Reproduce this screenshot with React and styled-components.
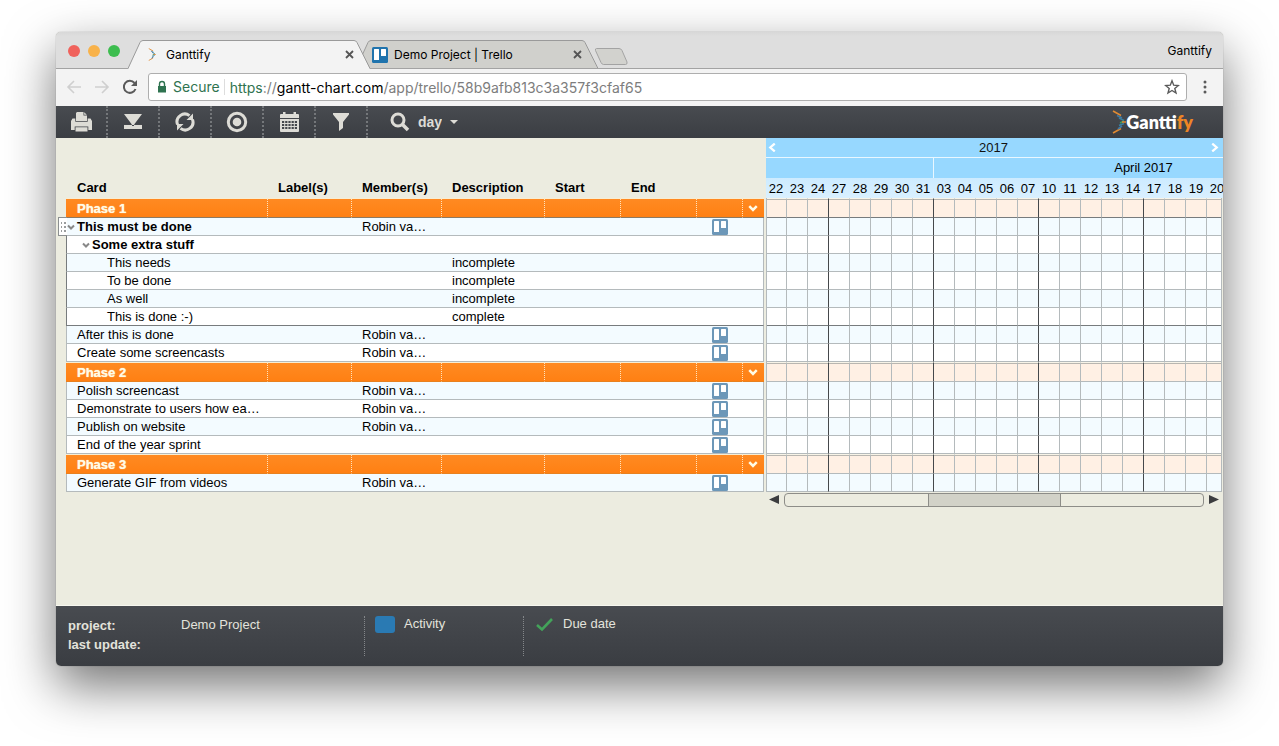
import React, { Fragment, useState } from 'react'
import styled, { createGlobalStyle, css } from 'styled-components'

const tabs = [
    { title: 'Ganttify', icon: 'ganttify', active: true },
    { title: 'Demo Project | Trello', icon: 'trello', active: false },
]

const columns = [
    { title: 'Card', width: 202 },
    { title: 'Label(s)', width: 84 },
    { title: 'Member(s)', width: 90 },
    { title: 'Description', width: 103 },
    { title: 'Start', width: 76 },
    { title: 'End', width: 76 },
    { title: '', width: 46 },
    { title: '', width: 21 },
]

const days = [
    '22', '23', '24', '27', '28', '29', '30', '31', '03', '04', '05',
    '06', '07', '10', '11', '12', '13', '14', '17', '18', '19', '20',
]
const weekEnds = ['24', '31', '07', '14']

const member = 'Robin va…'

const phases = [
    {
        title: 'Phase 1',
        selected: true,
        cards: [
            { name: 'This must be done', level: 0, open: true, member, trello: true, selected: true, handle: true },
            { name: 'Some extra stuff', level: 1, open: true, selected: true },
            { name: 'This needs', level: 2, description: 'incomplete', selected: true },
            { name: 'To be done', level: 2, description: 'incomplete', selected: true },
            { name: 'As well', level: 2, description: 'incomplete', selected: true },
            { name: 'This is done :-)', level: 2, description: 'complete', selected: true, last: true },
            { name: 'After this is done', level: 0, member, trello: true },
            { name: 'Create some screencasts', level: 0, member, trello: true },
        ],
    },
    {
        title: 'Phase 2',
        cards: [
            { name: 'Polish screencast', level: 0, member, trello: true },
            { name: 'Demonstrate to users how ea…', level: 0, member, trello: true },
            { name: 'Publish on website', level: 0, member, trello: true },
            { name: 'End of the year sprint', level: 0, trello: true },
        ],
    },
    {
        title: 'Phase 3',
        cards: [{ name: 'Generate GIF from videos', level: 0, member, trello: true }],
    },
]

const GlobalStyle = createGlobalStyle`
    * {
        box-sizing: border-box;
    }
    body {
        margin: 0;
        background: #ffffff;
        font-family: 'Liberation Sans', Arial, sans-serif;
        font-size: 13px;
        color: #000000;
    }
    button, input, select {
        margin: 0;
        padding: 0;
        border: none;
        background: none;
        color: inherit;
        font: inherit;
        cursor: pointer;
    }
    table {
        border-collapse: separate;
        border-spacing: 0;
        table-layout: fixed;
    }
    th, td {
        padding: 0;
    }
    svg {
        display: block;
        flex: none;
    }
`

/* browser window */

const Page = styled.div`
    display: flex;
    min-height: 100vh;
    padding: 32px 56px 80px;
`
const BrowserWindow = styled.div`
    display: flex;
    flex-direction: column;
    flex: 1;
    min-width: 0;
    overflow: hidden;
    border-radius: 5px;
    background: #ecece0;
    box-shadow: 0 0 1px rgba(0, 0, 0, 0.5), 0 20px 50px rgba(0, 0, 0, 0.55);
`
const TitleBar = styled.div`
    display: flex;
    align-items: flex-end;
    height: 37px;
    padding-left: 12px;
    background: linear-gradient(#d8d8d8, #dedede 4px);
    box-shadow: inset 0 -1px #a3a3a3;
    font-family: Inter, Roboto, sans-serif;
    font-size: 12px;
`
const TrafficLights = styled.div`
    display: flex;
    align-self: center;
    gap: 8px;
    width: 60px;
`
const TrafficLight = styled.button`
    width: 12px;
    height: 12px;
    border-radius: 50%;
    background: ${(props) => props.$color};
`
const TabShell = styled.div`
    position: relative;
    display: flex;
    align-items: center;
    width: 242px;
    height: 29px;
    padding: 0 16px;
    z-index: ${(props) => (props.$active ? 2 : 1)};
    & + & {
        margin-left: -14px;
    }
`
const TabShape = styled.svg`
    position: absolute;
    top: 0;
    left: 0;
    z-index: -1;
`
const TabTitle = styled.span`
    flex: 1;
    margin-left: 6px;
    white-space: nowrap;
`
const TabClose = styled.button`
    color: #555555;
`
const NewTab = styled.button`
    align-self: flex-end;
    margin: 0 0 4px -4px;
    z-index: 3;
`
const ProfileName = styled.button`
    align-self: center;
    margin: 0 11px 0 auto;
    cursor: default;
`
const AddressRow = styled.div`
    display: flex;
    align-items: center;
    height: 37px;
    padding: 0 10px 1px;
    gap: 10px;
    background: #f3f3f3;
    color: #5a5a5a;
`
const NavButtons = styled.nav`
    display: flex;
    gap: 12px;
`
const NavButton = styled.button`
    display: flex;
    justify-content: center;
    width: 16px;
    color: ${(props) => (props.disabled ? '#cfcfcf' : '#5a5a5a')};
`
const AddressBar = styled.div`
    display: flex;
    align-items: center;
    flex: 1;
    height: 28px;
    padding: 0 6px 0 7px;
    border: 1px solid #aeaeae;
    border-radius: 3px;
    background: #ffffff;
    font-family: Inter, Roboto, sans-serif;
    font-size: 14px;
    white-space: nowrap;
`
const Secure = styled.span`
    margin-left: 5px;
    padding-right: 4px;
    border-right: 1px solid #dddddd;
    color: #2f7350;
    line-height: 16px;
`
const Url = styled.span`
    flex: 1;
    margin-left: 5px;
    color: #7d7d7d;
`
const UrlScheme = styled.span`
    color: #2f7350;
`
const UrlHost = styled.span`
    color: #000000;
`

/* application */

const Toolbar = styled.div`
    display: flex;
    height: 32px;
    background: linear-gradient(#484b50, #3b3e43);
    color: #dddcd6;
`
const ToolButton = styled.button`
    display: flex;
    align-items: center;
    justify-content: center;
    width: 52px;
    border-right: 2px dotted #74777a;
    color: #dddcd6;
`
const ZoomLabel = styled.label`
    display: flex;
    align-items: center;
    gap: 8px;
    padding-left: 22px;
    font-size: 14px;
    font-weight: bold;
`
const ZoomSelect = styled.select`
    width: 24px;
    appearance: none;
    outline: none;
`
const Logo = styled.a`
    display: flex;
    align-items: center;
    margin: 0 30px 0 auto;
    color: #ffffff;
    font: 800 18px Lato, sans-serif;
    text-decoration: none;
    span {
        color: #ee8525;
    }
`
const Workspace = styled.main`
    display: flex;
    flex: 1;
    align-items: flex-start;
    gap: 2px;
    padding-left: 10px;
`
const CardTable = styled.table`
    flex: none;
    width: 698px;
`
const HeadCell = styled.th`
    height: 60px;
    padding: 0 0 2px 11px;
    vertical-align: bottom;
    text-align: left;
    line-height: 16px;
    & + & {
        padding-left: 10px;
    }
`
const PhaseCell = styled.td`
    height: 20px;
    padding-left: ${(props) => (props.$first ? 11 : 0)}px;
    border-top: 1px solid #f8edd2;
    border-bottom: 1px solid ${(props) => (props.$selected ? '#8d7a62' : '#e8811f')};
    background: linear-gradient(#ff8a22, #ff8013);
    color: #fffbe6;
    font-weight: bold;
    line-height: 18px;
    text-shadow: 0 0 1px #fffbe6;
    &:first-child {
        padding-top: 1px;
        line-height: 17px;
    }
    &:not(:last-child) {
        border-right: 1px dotted #ffe3bd;
    }
`
const PhaseToggle = styled.button`
    display: flex;
    align-items: center;
    justify-content: center;
    width: 20px;
    height: 18px;
`
const CardRow = styled.tr`
    background: ${(props) => (props.$odd ? '#f3fbff' : '#ffffff')};
    td {
        height: 18px;
        border-bottom: 1px solid ${(props) => (props.$last ? '#777b7d' : '#b4babc')};
        line-height: 17px;
        white-space: nowrap;
    }
    td:first-child {
        border-left: 1px solid ${(props) => (props.$selected ? '#777b7d' : '#b4babc')};
    }
    td:last-child {
        border-right: 1px solid #b4babc;
    }
`
const TextCell = styled.td`
    padding-left: 10px;
`
const NameCell = styled.div`
    position: relative;
    display: flex;
    align-items: center;
    height: 17px;
    padding-left: ${(props) => props.$level * 15}px;
    font-weight: ${(props) => (props.$bold ? 'bold' : 'normal')};
`
const ToggleSlot = styled.span`
    display: flex;
    flex: none;
    width: 10px;
`
const RowToggle = styled.button`
    color: #888888;
`
const DragHandle = styled.button`
    position: absolute;
    top: -1px;
    left: -9px;
    width: 9px;
    height: 19px;
    border: 1px solid #8b8f90;
    border-right: none;
    background: #ffffff;
    cursor: grab;
`
const TrelloLink = styled.a`
    display: flex;
    justify-content: center;
`
const Timeline = styled.section`
    flex: 1;
    min-width: 0;
`
const YearBar = styled.div`
    display: flex;
    align-items: center;
    justify-content: space-between;
    height: 20px;
    padding: 0 4px 0 2px;
    border-bottom: 1px solid #e9f7ff;
    background: #97d8ff;
    color: #ffffff;
`
const YearName = styled.span`
    color: #111111;
    line-height: 16px;
`
const MonthBar = styled.div`
    display: flex;
    height: 20px;
    overflow: hidden;
    background: #97d8ff;
    line-height: 20px;
    text-align: center;
`
const Month = styled.div`
    flex: none;
    width: ${(props) => props.$width}px;
    & + & {
        border-left: 1px solid #e9f7ff;
    }
`
const DayBar = styled.div`
    display: flex;
    height: 20px;
    overflow: hidden;
    background: linear-gradient(#cdebff, #d9f0ff);
    line-height: 22px;
    text-align: center;
`
const Day = styled.span`
    flex: none;
    width: 21px;
    padding-right: 1px;
`
const GridFrame = styled.div`
    margin-right: 1px;
    overflow: hidden;
    border: solid #b4babc;
    border-width: 0 1px;
`
const GridTable = styled.table`
    width: 461px;
`
const gridLine = css`
    border-right: 1px solid ${(props) => (props.$weekEnd ? '#45484b' : '#b4babc')};
`
const PhaseDay = styled.td`
    height: 20px;
    border-top: 1px solid #f8f4e8;
    border-bottom: 1px solid ${(props) => (props.$selected ? '#777b7d' : '#b4babc')};
    background: #fff0e4;
    box-shadow: inset 0 1px #b9b6b0;
    ${gridLine}
`
const CardDay = styled.td`
    height: 18px;
    border-bottom: 1px solid ${(props) => (props.$last ? '#777b7d' : '#b4babc')};
    background: ${(props) => (props.$odd ? '#f3fbff' : '#ffffff')};
    ${gridLine}
`
const ScrollRow = styled.div`
    display: flex;
    align-items: center;
    gap: 5px;
    height: 16px;
    padding: 0 4px 1px 3px;
    color: #3c3d3f;
`
const ScrollTrack = styled.input`
    flex: 1;
    min-width: 0;
    height: 14px;
    appearance: none;
    border: 1px solid #8d8d88;
    border-radius: 4px;
    background: #ecece0;
    &::-webkit-slider-thumb {
        appearance: none;
        width: 133px;
        height: 12px;
        border: solid #8d8d88;
        border-width: 0 1px;
        background: #d2d2c8;
    }
`
const Footer = styled.footer`
    display: flex;
    height: 61px;
    padding: 10px 12px;
    border-top: 1px solid #f7f7ef;
    background: linear-gradient(#484b50, #3a3d42);
    color: #e3e3dc;
    line-height: 16px;
`
const ProjectInfo = styled.dl`
    display: grid;
    grid-template-columns: 113px 1fr;
    grid-auto-rows: 19px;
    width: 296px;
    margin: 0;
    dt {
        font-weight: bold;
        line-height: 20px;
    }
    dd {
        margin: 0;
        line-height: 18px;
    }
`
const Legend = styled.div`
    display: flex;
    align-items: flex-start;
    gap: 9px;
    width: 159px;
    height: 40px;
    padding-left: 10px;
    border-left: 1px dotted #84878a;
`
const ActivitySwatch = styled.span`
    width: 20px;
    height: 17px;
    border-radius: 3px;
    background: #2a7ab3;
`

function GanttifyMark({ width, height }) {
    return (
        <svg width={width} height={height} viewBox="0 0 14 24" fill="none" strokeWidth="1.600">
            <path d="M1 1l8 4.500M1 23l8-4.500" stroke="#e08a32" />
            <path d="M5 5.500l5 2.500M6 19l4-3" stroke="#3f78a4" />
            <path d="M7 8l5 2.500M7 15.500l5-2" stroke="#3a7fa0" />
            <path d="M8 13l4-2" stroke="#3f9a62" />
            <path d="M10 12h4" stroke="#e08a32" />
        </svg>
    )
}

function TrelloIcon({ color }) {
    return (
        <svg width="16" height="16" viewBox="0 0 16 16">
            <rect width="16" height="16" rx="1.500" fill={color} />
            <rect x="2" y="2" width="5" height="11" rx="0.500" fill="#ffffff" />
            <rect x="9" y="2" width="5" height="7" rx="0.500" fill="#ffffff" />
        </svg>
    )
}

function Chevron({ size = 8, weight = 2, d = 'M1 2.500L4 5.500L7 2.500' }) {
    return (
        <svg width={size} height={size} viewBox="0 0 8 8" fill="none" stroke="currentColor" strokeWidth={weight}>
            <path d={d} />
        </svg>
    )
}

const tools = [
    {
        label: 'Print',
        icon: (
            <svg width="21" height="20" viewBox="0 0 21 20" fill="currentColor">
                <path d="M6 0h6.500v3.500H16V9H5V1z" />
                <path d="M13.200 0.200L15.800 2.800H13.200z" />
                <path d="M1.500 6.500h2.800v3.200h12.400V6.500h2.800L21 9v9h-3.700v-3.500H3.700V18H0V9z" />
                <path d="M4.500 15.300h12V19.500h-12z" />
            </svg>
        ),
    },
    {
        label: 'Collapse',
        icon: (
            <svg width="18" height="16" viewBox="0 0 18 16" fill="currentColor">
                <path d="M0 0h18l-7.500 10H18v5H0v-5h7.500z" />
                <path d="M0 10.500h7.500L9 12l1.500-1.500H18" fill="none" stroke="#44474c" />
            </svg>
        ),
    },
    {
        label: 'Refresh',
        icon: (
            <svg width="20" height="20" viewBox="0 0 20 20" fill="none" stroke="currentColor" strokeWidth="3">
                <path d="M2.500 12.500A7.800 7.800 0 0 1 14.500 3.600" />
                <path d="M17.500 7.500A7.800 7.800 0 0 1 5.500 16.400" />
                <path d="M18 1.500v6.500H11.500z M2 18.500v-6.500H8.500z" fill="currentColor" stroke="none" />
            </svg>
        ),
    },
    {
        label: 'Go to today',
        icon: (
            <svg width="22" height="22" viewBox="0 0 22 22">
                <circle cx="11" cy="11" r="8.700" fill="none" stroke="currentColor" strokeWidth="3" />
                <circle cx="11" cy="11" r="4.300" fill="currentColor" />
            </svg>
        ),
    },
    {
        label: 'Calendar',
        icon: (
            <svg width="19" height="20" viewBox="0 0 19 20" fill="currentColor">
                <path d="M0 3a1 1 0 0 1 1-1h2V0h2.500v2h8V0H16v2h2a1 1 0 0 1 1 1v3H0z" />
                <path d="M0 7h19v12a1 1 0 0 1-1 1H1a1 1 0 0 1-1-1z" />
                <path
                    d="M2 10h15M2 13h15M2 16h15"
                    stroke="#44474c"
                    strokeWidth="1.800"
                    strokeDasharray="2.200 1"
                />
            </svg>
        ),
    },
    {
        label: 'Filter',
        icon: (
            <svg width="16" height="18" viewBox="0 0 16 18" fill="currentColor">
                <path d="M0 0h16v1.500L10 9v6l-4 3V9L0 1.500z" />
            </svg>
        ),
    },
]

function Tab({ title, icon, active }) {
    return (
        <TabShell $active={active}>
            <TabShape width="242" height="29" viewBox="0 0 242 29">
                <path
                    d="M0 29L12 2.500Q13 0.500 15 0.500H226Q228 0.500 229 2.500L242 29z"
                    fill={active ? '#f3f3f3' : '#d0d0cc'}
                />
                <path
                    d="M0 28.500L12 2.500Q13 0.500 15 0.500H226Q228 0.500 229 2.500L242 28.500"
                    fill="none"
                    stroke="#9a9a9a"
                />
                {!active && <path d="M0 28.500H242" stroke="#a3a3a3" />}
            </TabShape>
            {icon === 'trello' ? <TrelloIcon color="#1f73ad" /> : <GanttifyMark width={16} height={13} />}
            <TabTitle>{title}</TabTitle>
            <TabClose aria-label={'Close ' + title}>
                <svg width="9" height="9" viewBox="0 0 9 9" stroke="currentColor" strokeWidth="1.800">
                    <path d="M1 1L8 8M8 1L1 8" />
                </svg>
            </TabClose>
        </TabShell>
    )
}

function BrowserChrome() {
    return (
        <Fragment>
            <TitleBar>
                <TrafficLights>
                    <TrafficLight $color="#f0625c" aria-label="Close window" />
                    <TrafficLight $color="#f8b24a" aria-label="Minimize window" />
                    <TrafficLight $color="#3dbd4f" aria-label="Zoom window" />
                </TrafficLights>
                {tabs.map((tab) => (
                    <Tab key={tab.title} {...tab} />
                ))}
                <NewTab aria-label="New tab">
                    <svg width="34" height="17" viewBox="0 0 34 17">
                        <path
                            d="M2.500 0.500H25Q27 0.500 28 2.500L33 14Q33.500 16.500 31.500 16.500H9.500Q8 16.500 7 14.500L1.500 2.500Q1 0.500 2.500 0.500z"
                            fill="#d2d2ce"
                            stroke="#a3a3a3"
                        />
                    </svg>
                </NewTab>
                <ProfileName>Ganttify</ProfileName>
            </TitleBar>
            <AddressRow>
                <NavButtons>
                    <NavButton disabled aria-label="Back">
                        <svg width="16" height="16" viewBox="0 0 16 16" fill="none" stroke="currentColor" strokeWidth="1.600">
                            <path d="M15 8H2M8 2L2 8l6 6" />
                        </svg>
                    </NavButton>
                    <NavButton disabled aria-label="Forward">
                        <svg width="16" height="16" viewBox="0 0 16 16" fill="none" stroke="currentColor" strokeWidth="1.600">
                            <path d="M1 8h13M8 2l6 6-6 6" />
                        </svg>
                    </NavButton>
                    <NavButton aria-label="Reload">
                        <svg width="16" height="16" viewBox="0 0 16 16" fill="none" stroke="currentColor" strokeWidth="2">
                            <path d="M13.500 10A6 6 0 1 1 12.500 4" />
                            <path d="M15 1v6H9z" fill="currentColor" stroke="none" />
                        </svg>
                    </NavButton>
                </NavButtons>
                <AddressBar>
                    <svg width="12" height="14" viewBox="0 0 12 14">
                        <rect x="2" y="6" width="8" height="6.500" fill="#2f7350" />
                        <path d="M3.500 6V4a2.500 2.500 0 0 1 5 0v2" fill="none" stroke="#2f7350" strokeWidth="1.400" />
                    </svg>
                    <Secure>Secure</Secure>
                    <Url>
                        <UrlScheme>https</UrlScheme>://
                        <UrlHost>gantt-chart.com</UrlHost>/app/trello/58b9afb813c3a357f3cfaf65
                    </Url>
                    <NavButton aria-label="Bookmark this page">
                        <svg width="16" height="16" viewBox="0 0 16 16" fill="none" stroke="currentColor" strokeWidth="1.400">
                            <path d="M8 1.800L9.700 6.200L14.400 6.500L10.800 9.500L12 14L8 11.500L4 14L5.200 9.500L1.600 6.500L6.300 6.200z" />
                        </svg>
                    </NavButton>
                </AddressBar>
                <NavButton aria-label="Menu">
                    <svg width="12" height="14" viewBox="0 0 12 14" fill="currentColor">
                        <circle cx="6" cy="2" r="1.500" />
                        <circle cx="6" cy="7" r="1.500" />
                        <circle cx="6" cy="12" r="1.500" />
                    </svg>
                </NavButton>
            </AddressRow>
        </Fragment>
    )
}

function AppToolbar() {
    const [zoom, setZoom] = useState('day')

    return (
        <Toolbar>
            {tools.map((tool) => (
                <ToolButton key={tool.label} aria-label={tool.label}>
                    {tool.icon}
                </ToolButton>
            ))}
            <ZoomLabel>
                <svg width="20" height="20" viewBox="0 0 20 20" fill="none" stroke="currentColor">
                    <circle cx="8" cy="8" r="6" strokeWidth="3" />
                    <path d="M12.500 12.500L18 18" strokeWidth="3.600" />
                </svg>
                <ZoomSelect aria-label="Zoom level" value={zoom} onChange={(e) => setZoom(e.target.value)}>
                    <option>day</option>
                    <option>week</option>
                </ZoomSelect>
                <svg width="8" height="4" viewBox="0 0 8 4" fill="currentColor">
                    <path d="M0 0h8L4 4z" />
                </svg>
            </ZoomLabel>
            <Logo href="#">
                <GanttifyMark width={14} height={24} />
                <div>
                    Gantt<span>ify</span>
                </div>
            </Logo>
        </Toolbar>
    )
}

function Cards() {
    return (
        <CardTable>
            <colgroup>
                {columns.map((column, i) => (
                    <col key={i} width={column.width} />
                ))}
            </colgroup>
            <thead>
                <tr>
                    {columns.map((column, i) => (
                        <HeadCell key={i}>{column.title}</HeadCell>
                    ))}
                </tr>
            </thead>
            {phases.map((phase) => (
                <tbody key={phase.title}>
                    <tr>
                        {columns.map((column, i) => (
                            <PhaseCell key={i} $first={i === 0} $selected={phase.selected}>
                                {i === 0 && phase.title}
                                {i === columns.length - 1 && (
                                    <PhaseToggle aria-label={'Collapse ' + phase.title}>
                                        <Chevron size={10} />
                                    </PhaseToggle>
                                )}
                            </PhaseCell>
                        ))}
                    </tr>
                    {phase.cards.map((card, i) => (
                        <CardRow key={card.name} $odd={i % 2 === 0} $selected={card.selected} $last={card.last}>
                            <td>
                                <NameCell $level={card.level} $bold={card.open}>
                                    {card.handle && (
                                        <DragHandle aria-label="Move card">
                                            <svg width="8" height="17" viewBox="0 0 8 17" fill="#9a9d9e">
                                                <path d="M2 4h1v2H2zM5 4h2v2H5zM2 8h1v2H2zM5 8h2v2H5zM2 12h1v2H2zM5 12h2v2H5z" />
                                            </svg>
                                        </DragHandle>
                                    )}
                                    <ToggleSlot>
                                        {card.open && (
                                            <RowToggle aria-label={'Collapse ' + card.name}>
                                                <Chevron />
                                            </RowToggle>
                                        )}
                                    </ToggleSlot>
                                    {card.name}
                                </NameCell>
                            </td>
                            <td />
                            <TextCell>{card.member}</TextCell>
                            <TextCell>{card.description}</TextCell>
                            <td />
                            <td />
                            <td>
                                {card.trello && (
                                    <TrelloLink href="#" aria-label={'Open ' + card.name + ' in Trello'}>
                                        <TrelloIcon color="#6c97b8" />
                                    </TrelloLink>
                                )}
                            </td>
                            <td />
                        </CardRow>
                    ))}
                </tbody>
            ))}
        </CardTable>
    )
}

function Calendar() {
    const [scroll, setScroll] = useState(50)

    return (
        <Timeline>
            <YearBar>
                <button aria-label="Previous year">
                    <Chevron size={9} d="M6 0.500L2 4L6 7.500" />
                </button>
                <YearName>2017</YearName>
                <button aria-label="Next year">
                    <Chevron size={9} d="M2 0.500L6 4L2 7.500" />
                </button>
            </YearBar>
            <MonthBar>
                <Month $width={167} />
                <Month $width={420}>April 2017</Month>
            </MonthBar>
            <DayBar>
                {days.map((day) => (
                    <Day key={day}>{day}</Day>
                ))}
            </DayBar>
            <GridFrame>
                <GridTable>
                    <colgroup>
                        {days.map((day, i) => (
                            <col key={day} width={i === 0 ? 20 : 21} />
                        ))}
                    </colgroup>
                    {phases.map((phase) => (
                        <tbody key={phase.title}>
                            <tr>
                                {days.map((day) => (
                                    <PhaseDay key={day} $weekEnd={weekEnds.includes(day)} $selected={phase.selected} />
                                ))}
                            </tr>
                            {phase.cards.map((card, i) => (
                                <tr key={card.name}>
                                    {days.map((day) => (
                                        <CardDay
                                            key={day}
                                            $odd={i % 2 === 0}
                                            $weekEnd={weekEnds.includes(day)}
                                            $last={card.last}
                                        />
                                    ))}
                                </tr>
                            ))}
                        </tbody>
                    ))}
                </GridTable>
            </GridFrame>
            <ScrollRow>
                <button aria-label="Scroll left" onClick={() => setScroll(Math.max(0, scroll - 5))}>
                    <svg width="10" height="9" viewBox="0 0 10 9" fill="currentColor">
                        <path d="M10 0v9L0 4.500z" />
                    </svg>
                </button>
                <ScrollTrack
                    type="range"
                    aria-label="Timeline position"
                    value={scroll}
                    onChange={(e) => setScroll(Number(e.target.value))}
                />
                <button aria-label="Scroll right" onClick={() => setScroll(Math.min(100, scroll + 5))}>
                    <svg width="10" height="9" viewBox="0 0 10 9" fill="currentColor">
                        <path d="M0 0v9l10-4.500z" />
                    </svg>
                </button>
            </ScrollRow>
        </Timeline>
    )
}

function App() {
    return (
        <Page>
            <GlobalStyle />
            <BrowserWindow>
                <BrowserChrome />
                <AppToolbar />
                <Workspace>
                    <Cards />
                    <Calendar />
                </Workspace>
                <Footer>
                    <ProjectInfo>
                        <dt>project:</dt>
                        <dd>Demo Project</dd>
                        <dt>last update:</dt>
                        <dd />
                    </ProjectInfo>
                    <Legend>
                        <ActivitySwatch />
                        Activity
                    </Legend>
                    <Legend>
                        <svg width="20" height="16" viewBox="0 0 20 16" fill="none" stroke="#43a35a" strokeWidth="2.600">
                            <path d="M3 9l5 4.500L18 3" />
                        </svg>
                        Due date
                    </Legend>
                </Footer>
            </BrowserWindow>
        </Page>
    )
}

export default App
